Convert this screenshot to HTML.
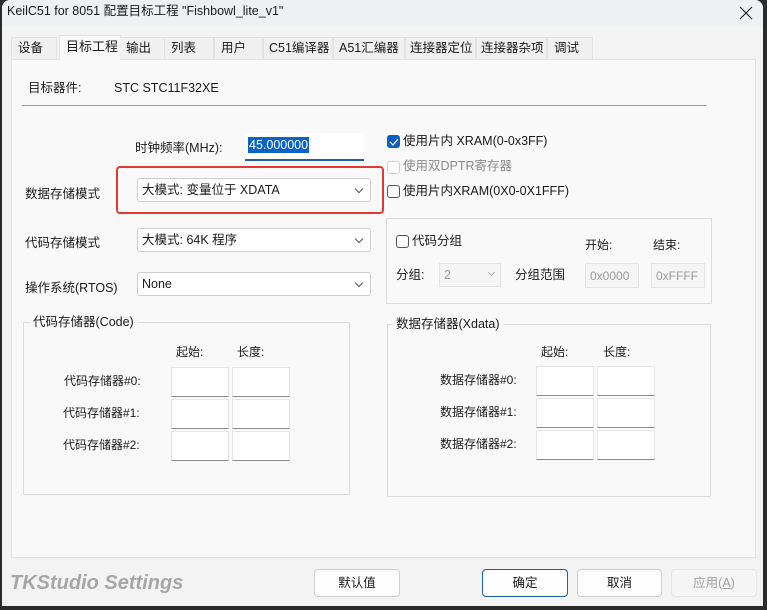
<!DOCTYPE html>
<html><head><meta charset="utf-8"><style>
*{margin:0;padding:0;box-sizing:border-box}
body{width:767px;height:610px;background:#2b2b2b;position:relative;overflow:hidden;font-family:"Liberation Sans","Noto Sans CJK SC",sans-serif;font-size:12px;color:#1a1a1a;line-height:15px}
.win{position:absolute;left:2px;top:0;width:761px;height:606px;background:#f3f3f3;border-radius:8px 8px 0 0;overflow:hidden}
.tb{position:absolute;left:0;top:0;width:100%;height:26px;background:#eef0f4}
.a{position:absolute;white-space:nowrap}
.tab{position:absolute;top:37px;height:22px;border:1px solid #e3e3e3;border-bottom:none;background:#f0f0f0;font-size:12.5px;padding:3px 0 0 6px;white-space:nowrap;overflow:hidden}
.panel{position:absolute;left:9px;top:59px;width:745px;height:499px;background:#f9f9f9;border:1px solid #e3e3e3}
.sel{position:absolute;height:24px;background:#fff;border:1px solid #cfcfcf;border-radius:3px;font-size:12.5px;padding:4px 0 0 4px}
.sel:after{content:"";position:absolute;right:8px;top:7px;width:5px;height:5px;border-right:1px solid #555;border-bottom:1px solid #555;transform:rotate(45deg)}
.cb{position:absolute;width:13px;height:13px;border:1px solid #555;border-radius:3px;background:#fff}
.grp{position:absolute;border:1px solid #dcdcdc}
.inp{position:absolute;width:58px;height:30px;background:#fff;border:1px solid #e5e5e5;border-bottom:1px solid #8a8a8a}
.btn{position:absolute;top:569px;height:28px;background:#fdfdfd;border:1px solid #d0d0d0;border-radius:4px;text-align:center;padding-top:6px;font-size:12.5px}
</style></head><body>
<div class="win">
<div class="tb"></div>
<div class="a" style="left:5px;top:4px;font-size:12.5px">KeilC51 for 8051 配置目标工程 "Fishbowl_lite_v1"</div>
<svg class="a" style="left:737px;top:6px" width="14" height="14"><path d="M1 1L13 13M13 1L1 13" stroke="#222" stroke-width="1.2"/></svg>
<div class="panel"></div>
<div class="tab" style="left:9px;width:46px">设备</div>
<div class="tab" style="left:57px;top:35px;height:25px;width:62px;background:#f9f9f9;font-size:13px;padding-top:3px">目标工程</div>
<div class="tab" style="left:118px;width:45px;border-left:none">输出</div>
<div class="tab" style="left:162px;width:50px">列表</div>
<div class="tab" style="left:212px;width:49px">用户</div>
<div class="tab" style="left:261px;width:70px;padding-left:5px">C51编译器</div>
<div class="tab" style="left:331px;width:72px;padding-left:5px">A51汇编器</div>
<div class="tab" style="left:403px;width:71px;padding-left:4px">连接器定位</div>
<div class="tab" style="left:474px;width:71px;padding-left:4px">连接器杂项</div>
<div class="tab" style="left:545px;width:46px">调试</div>

<div class="a" style="left:26px;top:81px;font-size:12.5px">目标器件:</div>
<div class="a" style="left:112px;top:81px;font-size:12.5px">STC STC11F32XE</div>
<div class="a" style="left:20px;top:105px;width:685px;height:1px;background:#a0a0a0"></div>

<div class="a" style="left:133px;top:141px;font-size:12.5px">时钟频率(MHz):</div>
<div class="a" style="left:243px;top:133px;width:119px;height:28px;background:#fff;border-bottom:2px solid #1d5fa8"></div>
<div class="a" style="left:246px;top:137px;background:#0a64c8;color:#fff;font-size:12.5px;padding:0 1px;line-height:16px">45.000000</div>

<div class="a" style="left:23px;top:187px;font-size:12.5px">数据存储模式</div>
<div class="sel" style="left:135px;top:178px;width:234px">大模式:&nbsp;变量位于 XDATA</div>
<div class="a" style="left:114px;top:166px;width:268px;height:48px;border:2px solid #e23a32;border-radius:4px"></div>
<div class="a" style="left:23px;top:236px;font-size:12.5px">代码存储模式</div>
<div class="sel" style="left:135px;top:228px;width:234px">大模式:&nbsp;64K 程序</div>
<div class="a" style="left:23px;top:281px;font-size:12.5px">操作系统(RTOS)</div>
<div class="sel" style="left:135px;top:272px;width:234px">None</div>

<div class="cb" style="left:385px;top:135px;background:#0a5fc0;border-color:#0a5fc0"></div>
<svg class="a" style="left:387px;top:138px" width="10" height="8"><path d="M1 4L4 7L9 1" stroke="#fff" stroke-width="1.2" fill="none"/></svg>
<div class="a" style="left:401px;top:134px;font-size:12.5px">使用片内 XRAM(0-0x3FF)</div>
<div class="cb" style="left:385px;top:161px;border-color:#cfcfcf"></div>
<div class="a" style="left:401px;top:159px;font-size:12.5px;color:#8a8a8a">使用双DPTR寄存器</div>
<div class="cb" style="left:385px;top:185px"></div>
<div class="a" style="left:401px;top:184px;font-size:12.5px">使用片内XRAM(0X0-0X1FFF)</div>

<div class="grp" style="left:384px;top:218px;width:326px;height:86px"></div>
<div class="cb" style="left:394px;top:235px"></div>
<div class="a" style="left:410px;top:234px;font-size:12.5px">代码分组</div>
<div class="a" style="left:583px;top:238px;font-size:12px">开始:</div>
<div class="a" style="left:651px;top:238px;font-size:12px">结束:</div>
<div class="a" style="left:394px;top:268px;font-size:12.5px">分组:</div>
<div class="a" style="left:437px;top:263px;width:62px;height:24px;border:1px solid #e3e3e3;background:#f5f5f5;color:#999;padding:4px 0 0 4px;font-size:12.5px">2</div>
<div class="a" style="left:487px;top:270px;width:5px;height:5px;border-right:1px solid #aaa;border-bottom:1px solid #aaa;transform:rotate(45deg)"></div>
<div class="a" style="left:513px;top:268px;font-size:12.5px">分组范围</div>
<div class="a" style="left:583px;top:263px;width:54px;height:25px;border:1px solid #e3e3e3;background:#f5f5f5;color:#999;padding:5px 0 0 4px">0x0000</div>
<div class="a" style="left:649px;top:263px;width:54px;height:25px;border:1px solid #e3e3e3;background:#f5f5f5;color:#999;padding:5px 0 0 4px">0xFFFF</div>

<div class="grp" style="left:21px;top:322px;width:327px;height:173px"></div>
<div class="a" style="left:28px;top:315px;background:#f9f9f9;padding:0 3px;font-size:12.5px">代码存储器(Code)</div>
<div class="a" style="left:174px;top:345px">起始:</div>
<div class="a" style="left:235px;top:345px">长度:</div>
<div class="a" style="left:62px;top:374px">代码存储器#0:</div>
<div class="a" style="left:61px;top:406px">代码存储器#1:</div>
<div class="a" style="left:61px;top:438px">代码存储器#2:</div>
<div class="inp" style="left:169px;top:367px"></div><div class="inp" style="left:230px;top:367px"></div>
<div class="inp" style="left:169px;top:399px"></div><div class="inp" style="left:230px;top:399px"></div>
<div class="inp" style="left:169px;top:431px"></div><div class="inp" style="left:230px;top:431px"></div>

<div class="grp" style="left:385px;top:324px;width:324px;height:173px"></div>
<div class="a" style="left:391px;top:317px;background:#f9f9f9;padding:0 3px;font-size:12.5px">数据存储器(Xdata)</div>
<div class="a" style="left:539px;top:345px">起始:</div>
<div class="a" style="left:601px;top:345px">长度:</div>
<div class="a" style="left:438px;top:373px">数据存储器#0:</div>
<div class="a" style="left:438px;top:405px">数据存储器#1:</div>
<div class="a" style="left:438px;top:437px">数据存储器#2:</div>
<div class="inp" style="left:534px;top:366px"></div><div class="inp" style="left:595px;top:366px"></div>
<div class="inp" style="left:534px;top:398px"></div><div class="inp" style="left:595px;top:398px"></div>
<div class="inp" style="left:534px;top:430px"></div><div class="inp" style="left:595px;top:430px"></div>

<div class="a" style="left:8px;top:572px;font-size:20px;line-height:22px;font-weight:bold;font-style:italic;color:#a6a6a6">TKStudio Settings</div>
<div class="btn" style="left:312px;width:86px">默认值</div>
<div class="btn" style="left:480px;width:86px;border-color:#1d5fa8">确定</div>
<div class="btn" style="left:575px;width:85px">取消</div>
<div class="btn" style="left:669px;width:86px;background:#f5f5f5;border-color:#e5e5e5;color:#a0a0a0">应用(<u>A</u>)</div>
</div>
</body></html>
